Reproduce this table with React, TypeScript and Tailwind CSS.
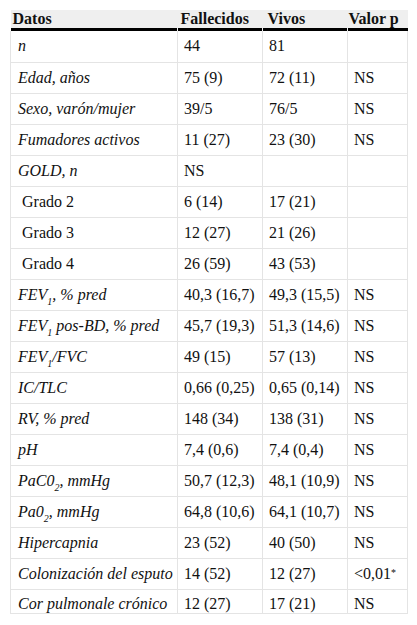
import React from 'react';

type Row = {
  label: React.ReactNode;
  italic?: boolean;
  fal: React.ReactNode;
  viv: React.ReactNode;
  p: React.ReactNode;
};

const Sub = ({ children }: { children: React.ReactNode }) => (
  <sub className="text-[10px] align-sub relative top-[1px]">{children}</sub>
);

const rows: Row[] = [
  { label: 'n', italic: true, fal: '44', viv: '81', p: '' },
  { label: 'Edad, años', italic: true, fal: '75 (9)', viv: '72 (11)', p: 'NS' },
  { label: 'Sexo, varón/mujer', italic: true, fal: '39/5', viv: '76/5', p: 'NS' },
  { label: 'Fumadores activos', italic: true, fal: '11 (27)', viv: '23 (30)', p: 'NS' },
  { label: 'GOLD, n', italic: true, fal: 'NS', viv: '', p: '' },
  { label: '\u00a0Grado 2', fal: '6 (14)', viv: '17 (21)', p: '' },
  { label: '\u00a0Grado 3', fal: '12 (27)', viv: '21 (26)', p: '' },
  { label: '\u00a0Grado 4', fal: '26 (59)', viv: '43 (53)', p: '' },
  { label: <>FEV<Sub>1</Sub>, % pred</>, italic: true, fal: '40,3 (16,7)', viv: '49,3 (15,5)', p: 'NS' },
  { label: <>FEV<Sub>1</Sub> pos-BD, % pred</>, italic: true, fal: '45,7 (19,3)', viv: '51,3 (14,6)', p: 'NS' },
  { label: <>FEV<Sub>1</Sub>/FVC</>, italic: true, fal: '49 (15)', viv: '57 (13)', p: 'NS' },
  { label: 'IC/TLC', italic: true, fal: '0,66 (0,25)', viv: '0,65 (0,14)', p: 'NS' },
  { label: 'RV, % pred', italic: true, fal: '148 (34)', viv: '138 (31)', p: 'NS' },
  { label: 'pH', italic: true, fal: '7,4 (0,6)', viv: '7,4 (0,4)', p: 'NS' },
  { label: <>PaC0<Sub>2</Sub>, mmHg</>, italic: true, fal: '50,7 (12,3)', viv: '48,1 (10,9)', p: 'NS' },
  { label: <>Pa0<Sub>2</Sub>, mmHg</>, italic: true, fal: '64,8 (10,6)', viv: '64,1 (10,7)', p: 'NS' },
  { label: 'Hipercapnia', italic: true, fal: '23 (52)', viv: '40 (50)', p: 'NS' },
  { label: 'Colonización del esputo', italic: true, fal: '14 (52)', viv: '12 (27)', p: <>&lt;0,01<sup className="text-[10px] relative -top-[3px]">*</sup></> },
  { label: 'Cor pulmonale crónico', italic: true, fal: '12 (27)', viv: '17 (21)', p: 'NS' },
];

const serif = "font-['Liberation_Serif']";

export default function App() {
  return (
    <div className={`bg-white w-[417px] h-[625px] pt-[10px] pl-[10px] text-[#111] text-[16px] ${serif}`}>
      <table className={`table-fixed border-collapse w-[397px] text-[16px] ${serif}`}>
        <colgroup>
          <col className="w-[167px]" />
          <col className="w-[85px]" />
          <col className="w-[85px]" />
          <col className="w-[60px]" />
        </colgroup>
        <thead>
          <tr className="bg-[#efefef]">
            {['Datos', 'Fallecidos', 'Vivos', 'Valor p'].map((h, i) => (
              <th key={h} className={`p-0 text-left font-bold align-bottom ${serif}`}>
                <div className={`h-[18px] leading-[18px] whitespace-nowrap ${i === 0 ? 'pl-[2px]' : i === 3 ? 'pl-[1px]' : i === 2 ? 'pl-[5px]' : 'pl-[3px]'}`}>{h}</div>
                <div className={`h-[3px] bg-black ${i < 3 ? 'mr-px' : ''}`} />
              </th>
            ))}
          </tr>
        </thead>
        <tbody>
          {rows.map((r, i) => {
            const last = i === rows.length - 1;
            const h = last ? 'h-[24px] pt-[4px] leading-[19px]' : 'h-[31px] leading-[20px]';
            const cell = `p-0 pl-[6px] border-b border-r border-[#e4e4e4] whitespace-nowrap ${serif} ${h}`;
            return (
              <tr key={i}>
                <td className={`${cell} border-l pl-[7px] ${r.italic ? 'italic' : ''}`}>{r.label}</td>
                <td className={cell}>{r.fal}</td>
                <td className={cell}>{r.viv}</td>
                <td className={cell}>{r.p}</td>
              </tr>
            );
          })}
        </tbody>
      </table>
    </div>
  );
}
